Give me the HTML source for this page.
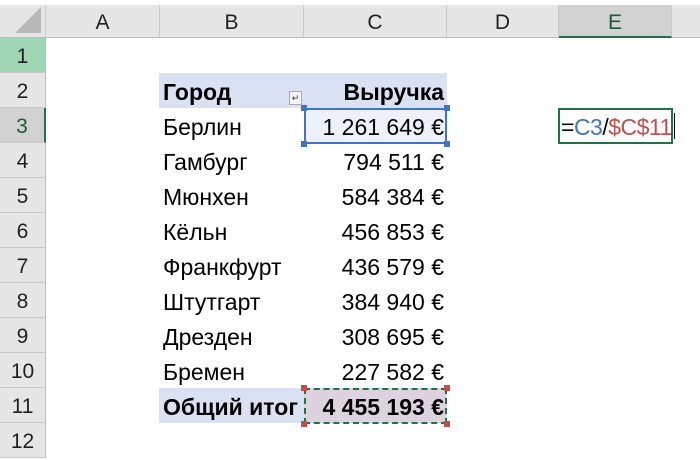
<!DOCTYPE html>
<html><head><meta charset="utf-8"><style>
body{margin:0;width:700px;height:457px;overflow:hidden;background:#fff;font-family:"Liberation Sans",sans-serif;position:relative}
.a{position:absolute;box-sizing:border-box}
.ch{top:5px;height:33px;background:#e6e6e6;border-right:1px solid #c8c8c8;border-bottom:1px solid #bdbdbd;text-align:center;line-height:35px;font-size:21px;color:#222}
.rh{left:0;width:46px;height:35px;background:#e6e6e6;border-bottom:1px solid #c8c8c8;border-right:1px solid #bdbdbd;text-align:center;line-height:37px;font-size:21px;color:#222}
.t{font-size:23px;line-height:39px;height:35px;color:#000;white-space:nowrap}
.l{left:163px}
.r{left:300px;width:144px;text-align:right}
</style></head><body>
<div class="a ch" style="left:0;width:46px"><div style="position:absolute;right:4px;bottom:4px;width:0;height:0;border-left:26px solid transparent;border-bottom:26px solid #b8b8b8"></div></div>
<div class="a ch" style="left:46px;width:114px">A</div>
<div class="a ch" style="left:160px;width:144px">B</div>
<div class="a ch" style="left:304px;width:143px">C</div>
<div class="a ch" style="left:447px;width:112px">D</div>
<div class="a ch" style="left:559px;width:113px;background:#d2d2d2;border-bottom:2px solid #217346;color:#1e5a36">E</div>
<div class="a ch" style="left:672px;width:28px;border-right:none"></div>

<div class="a rh" style="top:38px;background:#a0d6b4">1</div>
<div class="a rh" style="top:73px">2</div>
<div class="a rh" style="top:108px;background:#d2d2d2;border-right:2px solid #217346;color:#1e5a36">3</div>
<div class="a rh" style="top:143px">4</div>
<div class="a rh" style="top:178px">5</div>
<div class="a rh" style="top:213px">6</div>
<div class="a rh" style="top:248px">7</div>
<div class="a rh" style="top:283px">8</div>
<div class="a rh" style="top:318px">9</div>
<div class="a rh" style="top:353px">10</div>
<div class="a rh" style="top:388px">11</div>
<div class="a rh" style="top:423px">12</div>

<div class="a" style="left:159px;top:73px;width:288px;height:35px;background:#d9e1f2"></div>
<div class="a" style="left:159px;top:388px;width:145px;height:35px;background:#d9e1f2"></div>
<div class="a" style="left:304px;top:388px;width:143px;height:35px;background:#dcd3de"></div>
<div class="a" style="left:304px;top:108px;width:143px;height:35px;background:#edf1f9"></div>

<div class="a t l" style="top:73px;font-weight:bold">Город</div>
<div class="a" style="left:289px;top:91px;width:13px;height:14px;border:1px solid #aaa;background:#f4f4f4;font-size:9px;line-height:12px;text-align:center;color:#333">↵</div>
<div class="a t r" style="top:73px;font-weight:bold">Выручка</div>
<div class="a t l" style="top:108px">Берлин</div><div class="a t r" style="top:108px">1 261 649 €</div>
<div class="a t l" style="top:143px">Гамбург</div><div class="a t r" style="top:143px">794 511 €</div>
<div class="a t l" style="top:178px">Мюнхен</div><div class="a t r" style="top:178px">584 384 €</div>
<div class="a t l" style="top:213px">Кёльн</div><div class="a t r" style="top:213px">456 853 €</div>
<div class="a t l" style="top:248px">Франкфурт</div><div class="a t r" style="top:248px">436 579 €</div>
<div class="a t l" style="top:283px">Штутгарт</div><div class="a t r" style="top:283px">384 940 €</div>
<div class="a t l" style="top:318px">Дрезден</div><div class="a t r" style="top:318px">308 695 €</div>
<div class="a t l" style="top:353px">Бремен</div><div class="a t r" style="top:353px">227 582 €</div>
<div class="a t l" style="top:388px;font-weight:bold">Общий итог</div><div class="a t r" style="top:388px;font-weight:bold">4 455 193 €</div>

<div class="a" style="left:304px;top:108px;width:143px;height:36px;border:2px solid #4472c4"></div>
<div class="a" style="left:301px;top:105px;width:6px;height:6px;background:#4472c4"></div>
<div class="a" style="left:444px;top:105px;width:6px;height:6px;background:#4472c4"></div>
<div class="a" style="left:301px;top:141px;width:6px;height:6px;background:#4472c4"></div>
<div class="a" style="left:444px;top:141px;width:6px;height:6px;background:#4472c4"></div>

<div class="a" style="left:304px;top:388px;width:143px;height:36px;border:2px dashed #217346"></div>
<div class="a" style="left:301px;top:385px;width:6px;height:6px;background:#c0504d"></div>
<div class="a" style="left:444px;top:385px;width:6px;height:6px;background:#c0504d"></div>
<div class="a" style="left:301px;top:421px;width:6px;height:6px;background:#c0504d"></div>
<div class="a" style="left:444px;top:421px;width:6px;height:6px;background:#c0504d"></div>

<div class="a" style="left:558px;top:108px;width:115px;height:36px;border:2px solid #217346"></div>
<div class="a t" style="left:561px;top:108px;letter-spacing:-0.5px">=<span style="color:#4472c4">C3</span>/<span style="color:#c0504d">$C$11</span></div>
<div class="a" style="left:674px;top:113px;width:1px;height:26px;background:#000"></div>
</body></html>
